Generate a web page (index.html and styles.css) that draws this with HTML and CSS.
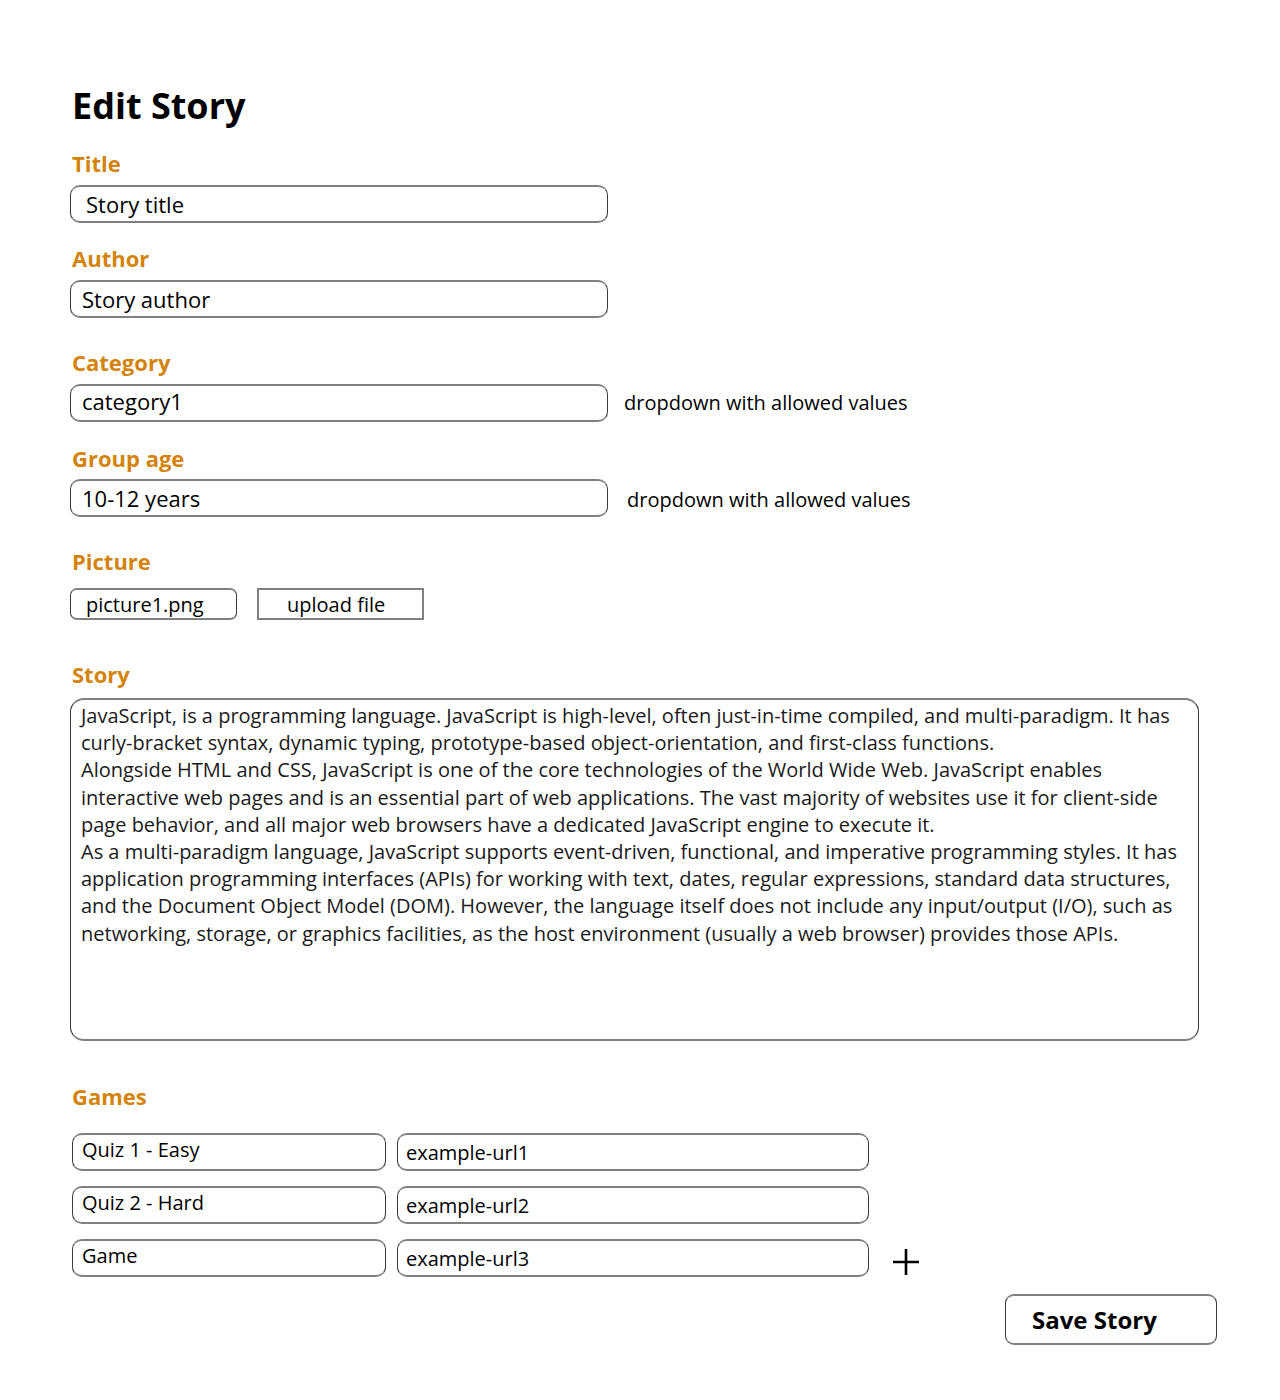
FILE: index.html
```html
<!DOCTYPE html>
<html lang="en">
<head>
<meta charset="utf-8">
<title>Edit Story</title>
<link rel="stylesheet" href="styles.css">
</head>
<body>
<main class="page">
  <h1 class="heading">Edit Story</h1>

  <div class="label label-title">Title</div>
  <div class="row">
    <div class="field field-wide pad-title">Story title</div>
  </div>

  <div class="label label-author">Author</div>
  <div class="row">
    <div class="field field-wide">Story author</div>
  </div>

  <div class="label label-category">Category</div>
  <div class="row">
    <div class="field field-wide raised">category1</div>
    <div class="note">dropdown with allowed values</div>
  </div>

  <div class="label label-age">Group age</div>
  <div class="row">
    <div class="field field-wide">10-12 years</div>
    <div class="note note-age">dropdown with allowed values</div>
  </div>

  <div class="label label-picture">Picture</div>
  <div class="row pic-row">
    <div class="field small-field">picture1.png</div>
    <div class="upload">upload file</div>
  </div>

  <div class="label label-story">Story</div>
  <div class="story">JavaScript, is a programming language. JavaScript is high-level, often just-in-time compiled, and multi-paradigm. It has<br>curly-bracket syntax, dynamic typing, prototype-based object-orientation, and first-class functions.<br>Alongside HTML and CSS, JavaScript is one of the core technologies of the World Wide Web. JavaScript enables<br>interactive web pages and is an essential part of web applications. The vast majority of websites use it for client-side<br>page behavior, and all major web browsers have a dedicated JavaScript engine to execute it.<br>As a multi-paradigm language, JavaScript supports event-driven, functional, and imperative programming styles. It has<br>application programming interfaces (APIs) for working with text, dates, regular expressions, standard data structures,<br>and the Document Object Model (DOM). However, the language itself does not include any input/output (I/O), such as<br>networking, storage, or graphics facilities, as the host environment (usually a web browser) provides those APIs.</div>

  <div class="label label-games">Games</div>
  <div class="games">
    <div class="game-row">
      <div class="field game-name raised">Quiz 1 - Easy</div>
      <div class="field game-url">example-url1</div>
    </div>
    <div class="game-row">
      <div class="field game-name raised">Quiz 2 - Hard</div>
      <div class="field game-url">example-url2</div>
    </div>
    <div class="game-row">
      <div class="field game-name raised">Game</div>
      <div class="field game-url">example-url3</div>
      <svg class="plus" width="28" height="28" viewBox="0 0 28 28" aria-label="add game">
        <path d="M14 1 V27 M1 14 H27" stroke="#000" stroke-width="2.6" fill="none"/>
      </svg>
    </div>
  </div>

  <div class="actions">
    <div class="save">Save Story</div>
  </div>
</main>
</body>
</html>
```

FILE: styles.css
```css
* { box-sizing: border-box; }

body {
  margin: 0;
  background: #fff;
  color: #000;
  font-family: "Open Sans", "Noto Sans", sans-serif;
}

.page {
  padding: 0 63px 40px 70px;
  display: flex;
  flex-direction: column;
}

.heading {
  margin: 84px 0 0 2px;
  font-size: 36px;
  line-height: 44px;
  font-weight: 700;
}

.label {
  color: #d4830c;
  font-weight: 700;
  font-size: 22px;
  line-height: 26px;
  margin-left: 2px;
}

.label-title { margin-top: 22px; margin-bottom: 9px; }
.label-author { margin-top: 22px; margin-bottom: 9px; }
.label-category { margin-top: 31px; margin-bottom: 9px; }
.label-age { margin-top: 23px; margin-bottom: 8px; }
.label-picture { margin-top: 31px; margin-bottom: 14px; }
.label-story { margin-top: 41px; margin-bottom: 11px; }
.label-games { margin-top: 42px; margin-bottom: 24px; }

.row {
  display: flex;
  align-items: center;
}

.field {
  height: 38px;
  border-style: solid;
  border-width: 2px 1px;
  border-color: #808080 #3a3a3a;
  border-radius: 10px;
  font-size: 22px;
  line-height: 34px;
  padding-left: 11px;
  white-space: nowrap;
}

.field-wide { width: 538px; }
.pad-title { padding-left: 15px; }
.raised { line-height: 30px; }

.note {
  margin-left: 16px;
  font-size: 20px;
  line-height: 26px;
}
.note-age { margin-left: 19px; margin-top: 4px; }

.pic-row { gap: 20px; }

.small-field {
  width: 167px;
  height: 32px;
  border-radius: 7px;
  font-size: 20px;
  line-height: 29px;
  padding-left: 15px;
}

.upload {
  width: 167px;
  height: 32px;
  border: 2px solid #808080;
  font-size: 20px;
  line-height: 30px;
  padding-left: 28px;
}

.story {
  width: 1129px;
  height: 343px;
  border-style: solid;
  border-width: 2px 1px;
  border-color: #808080 #3a3a3a;
  border-radius: 14px;
  padding: 2px 0 0 10px;
  font-size: 20px;
  line-height: 27.2px;
  white-space: nowrap;
  color: #1a1a1a;
}

.games {
  display: flex;
  flex-direction: column;
  gap: 15px;
  margin-left: 2px;
}

.game-row {
  display: flex;
  align-items: center;
}

.game-name { width: 314px; padding-left: 9px; font-size: 20px; }
.game-url { width: 472px; margin-left: 11px; padding-left: 8px; font-size: 20px; line-height: 36px; }

.plus { margin-left: 23px; margin-top: 8px; }

.actions {
  display: flex;
  justify-content: flex-end;
  margin-top: 17px;
}

.save {
  width: 212px;
  height: 51px;
  border-style: solid;
  border-width: 2px 1px;
  border-color: #808080 #3a3a3a;
  border-radius: 9px;
  font-weight: 700;
  font-size: 24px;
  line-height: 47px;
  padding-left: 26px;
}
```
